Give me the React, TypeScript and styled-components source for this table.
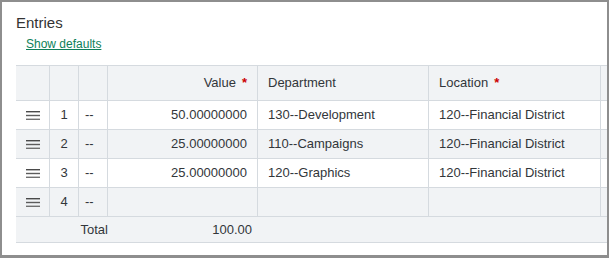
import React from "react";
import styled, { createGlobalStyle } from "styled-components";

const Global = createGlobalStyle`
  html, body { margin: 0; padding: 0; background: #ffffff; }
  body { font-family: "Liberation Sans", Arial, sans-serif; color: #32363a; }
`;

const Frame = styled.div`
  box-sizing: border-box;
  width: 609px;
  height: 258px;
  border-style: solid;
  border-color: #8e8e8e;
  border-width: 2px 2px 3px 2px;
  background: #ffffff;
  overflow: hidden;
  padding: 12px 0 0 14px;
`;

const Title = styled.h2`
  margin: 0;
  font-size: 15px;
  line-height: 18px;
  font-weight: normal;
  color: #333333;
`;

const DefaultsLink = styled.a`
  display: inline-block;
  margin: 5px 0 0 10px;
  font-size: 12px;
  line-height: 14px;
  color: #0e7f5a;
  text-decoration: underline;
  text-underline-offset: 1px;
  cursor: pointer;
`;

const Grid = styled.div`
  margin-top: 13px;
  width: 720px;
  border-top: 1px solid #d5dadf;
`;

const COLS = "34px 29px 29px 150px 171px 172px 135px";

const Row = styled.div<{ $shade?: boolean; $h: number }>`
  display: grid;
  grid-template-columns: ${COLS};
  height: ${(p) => p.$h}px;
  background: ${(p) => (p.$shade ? "#f1f3f5" : "#ffffff")};
`;

const Cell = styled.div<{ $align?: "left" | "right" | "center"; $pad?: number }>`
  box-sizing: border-box;
  display: flex;
  align-items: center;
  justify-content: ${(p) =>
    p.$align === "right" ? "flex-end" : p.$align === "center" ? "center" : "flex-start"};
  padding: 0 ${(p) => p.$pad ?? 10}px;
  border-right: 1px solid #d5dadf;
  border-bottom: 1px solid #d5dadf;
  font-size: 13px;
  line-height: 16px;
  white-space: nowrap;
  overflow: hidden;
`;

const TotalRow = styled.div`
  display: grid;
  grid-template-columns: ${COLS};
  height: 26px;
  background: #f1f3f5;
  box-sizing: border-box;
  border-bottom: 1px solid #d5dadf;
`;

const TotalCell = styled.div<{ $span?: string; $pad?: number }>`
  grid-column: ${(p) => p.$span ?? "auto"};
  display: flex;
  align-items: center;
  justify-content: flex-end;
  padding-right: ${(p) => p.$pad ?? 0}px;
  font-size: 13px;
  line-height: 16px;
  white-space: nowrap;
`;

const Required = styled.span`
  color: #cc0000;
  font-weight: bold;
  margin-left: 6px;
`;

const Handle = () => (
  <svg width="14" height="9" viewBox="0 0 14 9" aria-hidden="true">
    <rect x="0" y="0" width="14" height="1.4" fill="#4a4a4a" />
    <rect x="0" y="3.8" width="14" height="1.4" fill="#5c5c5c" />
    <rect x="0" y="7.6" width="14" height="1.4" fill="#707070" />
  </svg>
);

type Entry = { n: number; value: string; dept: string; loc: string };

const entries: Entry[] = [
  { n: 1, value: "50.00000000", dept: "130--Development", loc: "120--Financial District" },
  { n: 2, value: "25.00000000", dept: "110--Campaigns", loc: "120--Financial District" },
  { n: 3, value: "25.00000000", dept: "120--Graphics", loc: "120--Financial District" },
  { n: 4, value: "", dept: "", loc: "" },
];

export default function App() {
  return (
    <>
      <Global />
      <Frame>
        <Title>Entries</Title>
        <DefaultsLink>Show defaults</DefaultsLink>
        <Grid>
          <Row $shade $h={35}>
            <Cell />
            <Cell />
            <Cell />
            <Cell $align="right">
              Value<Required>*</Required>
            </Cell>
            <Cell>Department</Cell>
            <Cell>
              Location<Required>*</Required>
            </Cell>
            <Cell />
          </Row>
          {entries.map((e, i) => (
            <Row key={e.n} $shade={i % 2 === 1} $h={29}>
              <Cell $align="center" $pad={0}>
                <Handle />
              </Cell>
              <Cell $align="center" $pad={0}>
                {e.n}
              </Cell>
              <Cell $pad={6}>--</Cell>
              <Cell $align="right">{e.value}</Cell>
              <Cell>{e.dept}</Cell>
              <Cell>{e.loc}</Cell>
              <Cell />
            </Row>
          ))}
          <TotalRow>
            <TotalCell $span="1 / 4">Total</TotalCell>
            <TotalCell $pad={6}>100.00</TotalCell>
          </TotalRow>
        </Grid>
      </Frame>
    </>
  );
}
